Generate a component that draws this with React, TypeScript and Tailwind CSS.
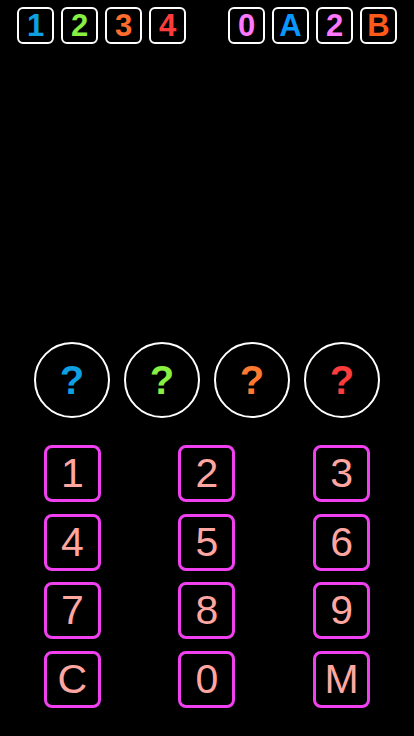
import React from 'react'

const left = [
  { ch: '1', color: 'text-[#0ea0e0]' },
  { ch: '2', color: 'text-[#88f040]' },
  { ch: '3', color: 'text-[#ff6c2c]' },
  { ch: '4', color: 'text-[#ff3c3c]' },
]

const right = [
  { ch: '0', color: 'text-[#ff78ff]' },
  { ch: 'A', color: 'text-[#0898ff]' },
  { ch: '2', color: 'text-[#ff78ff]' },
  { ch: 'B', color: 'text-[#ff5a1a]' },
]

const guesses = [
  'text-[#0ea0e0]',
  'text-[#88f040]',
  'text-[#ff7a30]',
  'text-[#ff3c3c]',
]

const keys = ['1', '2', '3', '4', '5', '6', '7', '8', '9', 'C', '0', 'M']

function Tile({ ch, color }: { ch: string; color: string }) {
  return (
    <div
      className={`w-[37px] h-[37px] rounded-[6px] border-2 border-white flex items-center justify-center text-[31px] font-bold leading-none ${color}`}
    >
      {ch}
    </div>
  )
}

export default function App() {
  return (
    <div
      className="w-[414px] h-[736px] bg-black flex flex-col overflow-hidden"
      style={{ fontFamily: '"Liberation Sans", Arial, sans-serif' }}
    >
      {/* history row */}
      <div className="flex justify-between px-[17px] pt-[7px]">
        <div className="flex gap-[7px]">
          {left.map((t, i) => (
            <Tile key={i} {...t} />
          ))}
        </div>
        <div className="flex gap-[7px]">
          {right.map((t, i) => (
            <Tile key={i} {...t} />
          ))}
        </div>
      </div>

      {/* current guess */}
      <div className="flex justify-center gap-[14px] mt-[298px]">
        {guesses.map((c, i) => (
          <div
            key={i}
            className={`w-[76px] h-[76px] rounded-full border-[2.5px] border-white flex items-center justify-center text-[40px] font-bold leading-none ${c}`}
          >
            ?
          </div>
        ))}
      </div>

      {/* keypad */}
      <div className="grid grid-cols-3 gap-y-[11.5px] px-[5px] mt-[27px]">
        {keys.map((k) => (
          <div key={k} className="flex justify-center">
            <button
              type="button"
              className="w-[57px] h-[57px] rounded-[8px] border-[3px] border-[#f040f0] flex items-center justify-center text-[41px] leading-none text-[#ffa6a0]"
            >
              {k}
            </button>
          </div>
        ))}
      </div>
    </div>
  )
}
